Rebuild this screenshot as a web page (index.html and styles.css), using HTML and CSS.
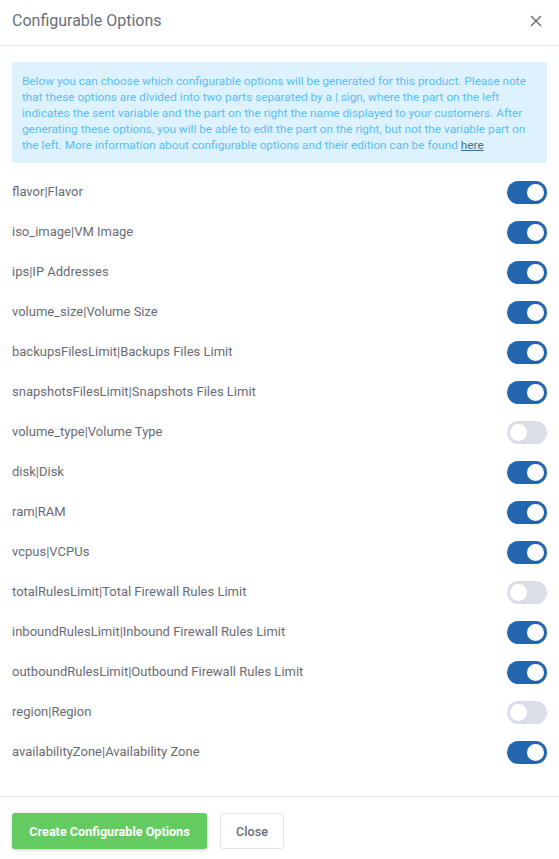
FILE: index.html
```html
<!DOCTYPE html>
<html>
<head>
<meta charset="utf-8">
<link rel="stylesheet" href="styles.css">
</head>
<body>
<div class="modal">
  <div class="header">
    <div class="title">Configurable Options</div>
    <svg class="close-x" width="12" height="12" viewBox="0 0 12 12"><path d="M1 1L11 11M11 1L1 11" stroke="#6f737c" stroke-width="1.5" fill="none"/></svg>
  </div>
  <div class="body">
    <div class="info">Below you can choose which configurable options will be generated for this product. Please note that these options are divided into two parts separated by a | sign, where the part on the left indicates the sent variable and the part on the right the name displayed to your customers. After generating these options, you will be able to edit the part on the right, but not the variable part on the left. More information about configurable options and their edition can be found <a href="#">here</a></div>
    <div class="list">
      <div class="row"><span>flavor|Flavor</span><span class="toggle on"></span></div>
      <div class="row"><span>iso_image|VM Image</span><span class="toggle on"></span></div>
      <div class="row"><span>ips|IP Addresses</span><span class="toggle on"></span></div>
      <div class="row"><span>volume_size|Volume Size</span><span class="toggle on"></span></div>
      <div class="row"><span>backupsFilesLimit|Backups Files Limit</span><span class="toggle on"></span></div>
      <div class="row"><span>snapshotsFilesLimit|Snapshots Files Limit</span><span class="toggle on"></span></div>
      <div class="row"><span>volume_type|Volume Type</span><span class="toggle"></span></div>
      <div class="row"><span>disk|Disk</span><span class="toggle on"></span></div>
      <div class="row"><span>ram|RAM</span><span class="toggle on"></span></div>
      <div class="row"><span>vcpus|VCPUs</span><span class="toggle on"></span></div>
      <div class="row"><span>totalRulesLimit|Total Firewall Rules Limit</span><span class="toggle"></span></div>
      <div class="row"><span>inboundRulesLimit|Inbound Firewall Rules Limit</span><span class="toggle on"></span></div>
      <div class="row"><span>outboundRulesLimit|Outbound Firewall Rules Limit</span><span class="toggle on"></span></div>
      <div class="row"><span>region|Region</span><span class="toggle"></span></div>
      <div class="row"><span>availabilityZone|Availability Zone</span><span class="toggle on"></span></div>
    </div>
  </div>
  <div class="footer">
    <button class="btn btn-primary">Create Configurable Options</button>
    <button class="btn btn-default">Close</button>
  </div>
</div>
</body>
</html>
```
FILE: styles.css
```css
* { box-sizing: border-box; }
html, body { margin: 0; padding: 0; background: #fff; }
body { font-family: Roboto, "Liberation Sans", Arial, sans-serif; width: 559px; height: 859px; overflow: hidden; }
.modal { width: 559px; }
.header {
  height: 46px;
  border-bottom: 1px solid #e6e7eb;
  display: flex;
  align-items: center;
  justify-content: space-between;
  padding: 0 17px 4px 12px;
}
.title { font-size: 16px; color: #6b6f78; }
.close-x { display: block; }
.body { padding: 16px 12px 24px 12px; }
.info {
  background: #ddf2fd;
  color: #5bbdf5;
  font-size: 11.8px;
  line-height: 16px;
  padding: 11px 10px 10px 10px;
  border-radius: 2px;
}
.info a { color: #3d6f8f; text-decoration: underline; }
.list { margin-top: 9px; }
.row {
  height: 40px;
  display: flex;
  align-items: center;
  justify-content: space-between;
  font-size: 13px;
  color: #686c75;
  padding-bottom: 1px;
}
.toggle {
  width: 40px;
  height: 23px;
  border-radius: 12px;
  background: #dcdee7;
  position: relative;
  margin-top: 2px;
}
.toggle::after {
  content: "";
  position: absolute;
  top: 3px;
  left: 3px;
  width: 17px;
  height: 17px;
  border-radius: 50%;
  background: #fff;
}
.toggle.on { background: #2366ad; }
.toggle.on::after { left: 20px; }
.footer {
  border-top: 1px solid #e6e7eb;
  padding: 16px 12px;
  display: flex;
  gap: 13px;
}
.btn {
  height: 36px;
  font-family: Roboto, "Liberation Sans", Arial, sans-serif;
  font-size: 12.6px;
  border-radius: 3px;
  padding: 0 12px;
  cursor: pointer;
}
.btn-primary {
  background: #63cb60;
  color: #fff;
  border: none;
  font-weight: 700;
  width: 195px;
  box-shadow: 0 1px 3px rgba(0,0,0,0.2);
}
.btn-default {
  background: #fff;
  color: #6b6f78;
  border: 1px solid #e3e4e8;
  font-weight: 500;
  width: 64px;
}
```
